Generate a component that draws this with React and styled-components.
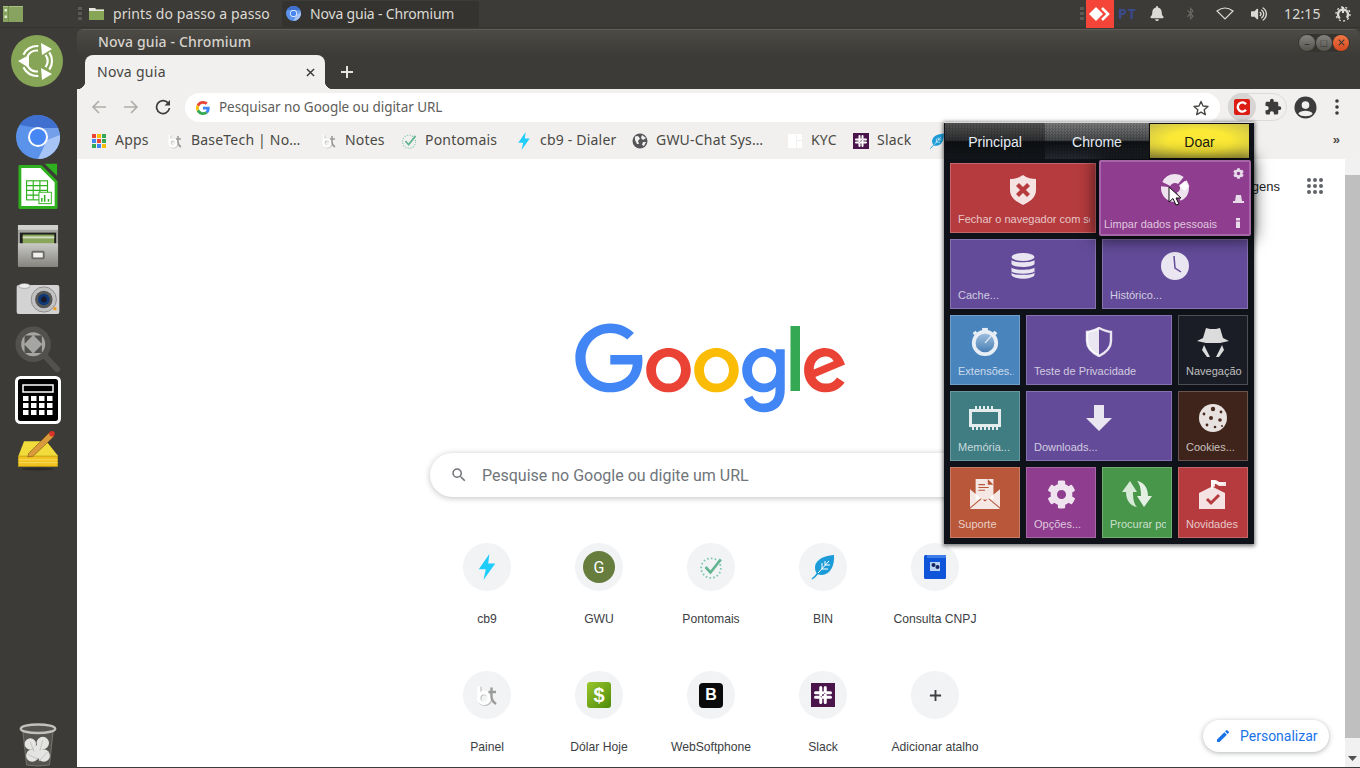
import React from 'react';
import styled, { createGlobalStyle } from 'styled-components';
import { FaCog, FaBell, FaBluetoothB, FaVolumeUp } from 'react-icons/fa';

const Global = createGlobalStyle`
  html, body { margin: 0; padding: 0; width: 1360px; height: 768px; overflow: hidden; background: #3c3b37; }
  #root { width: 1360px; height: 768px; }
  * { box-sizing: border-box; }
`;
const UI = `"Noto Sans", "Open Sans", sans-serif`;
const SANS = `"Liberation Sans", Arial, sans-serif`;

const Desktop = styled.div`
  width: 1360px; height: 768px; display: flex; flex-direction: column; background: #3c3b37; font-family: ${UI};
`;
const TopBar = styled.header`
  height: 28px; flex: none; display: flex; align-items: center; background: #3c3b37; color: #dcdad4;
  font-size: 14px; padding-left: 3px; border-bottom: 1px solid #35342f;
`;
const Grip = styled.span`
  width: 4px; height: 14px; flex: none; margin-left: ${p => p.$ml || 0}px;
  background: repeating-linear-gradient(#5b5a55 0 3px, transparent 3px 5px);
`;
const TaskItem = styled.div`
  display: flex; align-items: center; gap: ${p => p.$gap}px; height: 26px; margin-left: ${p => p.$ml}px;
  width: ${p => p.$w}px; padding-left: ${p => p.$pad}px; border-radius: 3px; background: ${p => p.$active ? '#34332f' : 'transparent'};
  letter-spacing: ${p => p.$ls}px; white-space: nowrap; font-size: 14px;
`;
const Tray = styled.div`
  margin-left: auto; display: flex; align-items: center; height: 28px;
`;
const AnyDesk = styled.div`
  width: 28px; height: 28px; background: #f44538; display: flex; align-items: center; justify-content: center; margin-left: 2px;
`;
const Lang = styled.span`
  color: #3b4a8f; font-weight: 700; font-size: 14px; width: 36px; padding-left: 4px; letter-spacing: 1px; font-family: ${UI};
`;
const TraySlot = styled.span`
  width: ${p => p.$w}px; margin-left: ${p => p.$ml || 0}px; display: flex; justify-content: center; align-items: center; color: ${p => p.$c || '#dcdad4'};
`;
const Clock = styled.span`
  width: 35px; font-size: 14px; letter-spacing: .2px; color: #dcdad4; white-space: nowrap;
`;
const Body = styled.div`
  flex: 1; min-height: 0; display: flex; padding-top: 1px;
`;
const Launcher = styled.nav`
  width: 77px; flex: none; display: flex; flex-direction: column; align-items: center; background: #3c3b37;
`;
const Slot = styled.div`
  height: ${p => p.$h}px; display: flex; align-items: center; justify-content: center; flex: none; width: 77px;
  margin-top: ${p => p.$auto ? 'auto' : `${p.$mt}px`}; padding-right: ${p => p.$pr ?? 1}px;
`;
const Win = styled.main`
  flex: 1; min-width: 0; display: flex; flex-direction: column; position: relative; border-radius: 6px 6px 0 0; overflow: hidden;
  background: #3c3b37; border-bottom: 1px solid #3c3b37;
`;
const TitleBar = styled.div`
  height: 26px; flex: none; display: flex; align-items: center; padding: 0 10px 0 21px; color: #d6d3cc;
  font-weight: 500; font-size: 14px; letter-spacing: .15px; border-top: 1px solid #5d5b56;
  background: linear-gradient(#4d4b46, #3c3b37);
`;
const Nudge = styled.span`
  margin-bottom: 2px; white-space: nowrap;
`;
const WinBtns = styled.div`
  margin-left: auto; display: flex; align-items: center; background: #35342f; border-radius: 10px; padding: 1px; gap: 1px;
`;
const WinBtn = styled.span`
  width: 16px; height: 16px; border-radius: 50%; display: flex; align-items: center; justify-content: center;
  color: #35342f; font-size: 11px; background: ${p => p.$close ? 'linear-gradient(#f07746, #d6481f)' : 'linear-gradient(#85837d, #55534e)'};
`;
const TabStrip = styled.div`
  height: 34px; flex: none; display: flex; align-items: flex-end; padding-left: 8px; background: #3c3b37;
`;
const Tab = styled.div`
  width: 240px; height: 34px; background: #f1f0ee; border-radius: 8px 8px 0 0; display: flex; align-items: center;
  padding: 0 10px 0 12px; color: #45443f; font-size: 14px; letter-spacing: .3px; position: relative;
  &::before, &::after { content: ''; position: absolute; bottom: 0; width: 8px; height: 8px; }
  &::before { left: -8px; background: radial-gradient(circle at 0 0, #3c3b37 8px, #f1f0ee 8.5px); }
  &::after { right: -8px; background: radial-gradient(circle at 100% 0, #3c3b37 8px, #f1f0ee 8.5px); }
`;
const TabClose = styled.span`
  margin-left: auto; display: flex; color: #3c3b37;
`;
const NewTab = styled.span`
  margin-left: 15px; margin-bottom: 10px; display: flex; color: #e6e4df;
`;
const Toolbar = styled.div`
  height: 33px; flex: none; background: #f1f0ee; display: flex; align-items: flex-start; padding: 4px 0 0 6px;
`;
const NavBtn = styled.span`
  width: 32px; height: 28px; display: flex; align-items: center; justify-content: center; flex: none;
`;
const Omni = styled.div`
  width: 1035px; height: 29px; background: #fff; border-radius: 15px; margin-left: 6px; display: flex; align-items: center;
  padding: 0 11px; color: #5f5e5a; font-size: 13.5px; letter-spacing: -.05px; gap: 9px; flex: none;
`;
const OmniStar = styled.span`
  margin-left: auto; display: flex;
`;
const ExtPill = styled.div`
  width: 59px; height: 28px; margin-left: 8px; border: 1px solid #dbdad8; border-radius: 14px; display: flex; align-items: center; flex: none;
`;
const ExtHover = styled.span`
  width: 28px; height: 28px; margin-left: -1px; border-radius: 50%; background: #d6d5d3; display: flex; align-items: center; justify-content: center;
`;
const ExtPuzzle = styled.span`
  margin-left: 8px; display: flex;
`;
const Avatar = styled.span`
  margin-left: 6px; width: 24px; height: 28px; display: flex; justify-content: center; align-items: center;
`;
const Kebab = styled.span`
  margin-left: 8px; width: 24px; height: 28px; display: flex; justify-content: center; align-items: center;
`;
const BookmarkBar = styled.div`
  height: 37px; flex: none; background: #f1f0ee; display: flex; align-items: center; padding-left: 14px; position: relative;
`;
const Bookmark = styled.div`
  display: flex; align-items: center; gap: 8px; flex: none; color: #4a4945; font-size: 14px; letter-spacing: .2px; white-space: nowrap;
`;
const BookmarkText = styled.span`
  width: ${p => p.$w}px; overflow: hidden; margin-bottom: 2px;
`;
const More = styled.span`
  margin-left: auto; margin-right: 20px; margin-bottom: 3px; color: #4a4945; font-size: 13px; font-family: ${SANS}; font-weight: 700;
`;
const PageArea = styled.div`
  flex: 1; min-height: 0; display: flex; background: #fff;
`;
const Ntp = styled.div`
  flex: 1; min-width: 0; display: flex; flex-direction: column; align-items: center; overflow: hidden; font-family: ${SANS}; position: relative;
`;
const NtpTop = styled.div`
  height: 54px; flex: none; width: 100%; display: flex; align-items: center; justify-content: flex-end; padding-right: 22px;
  font-size: 13px; color: #202124; gap: 27px;
`;
const LogoWrap = styled.div`
  margin-top: 110px; height: 92px; flex: none; display: flex;
`;
const Search = styled.div`
  margin-top: 38px; width: 562px; height: 44px; flex: none; border-radius: 22px; background: #fff; display: flex; align-items: center;
  box-shadow: 0 1px 6px rgba(32,33,36,.28); padding-left: 20px; gap: 14px; color: #70757a; font-size: 16px; font-family: "Roboto", sans-serif;
`;
const Shortcuts = styled.div`
  margin-top: 46px; display: grid; grid-template-columns: repeat(5, 112px); grid-auto-rows: 128px; flex: none;
`;
const Shortcut = styled.div`
  display: flex; flex-direction: column; align-items: center;
`;
const Circle = styled.div`
  width: 48px; height: 48px; border-radius: 50%; background: #f1f3f4; display: flex; align-items: center; justify-content: center;
`;
const ShortcutLabel = styled.div`
  margin-top: 20px; line-height: 16px; font-size: 12.15px; color: #3c4043; white-space: nowrap; font-family: ${SANS};
`;
const Personalize = styled.div`
  position: absolute; right: 16px; bottom: 15px; width: 126px; height: 32px; border-radius: 16px; background: #fff; display: flex; align-items: center;
  padding-left: 12px; gap: 9px; color: #1a73e8; font-size: 14px; font-family: "Roboto", sans-serif;
  box-shadow: 0 1px 5px rgba(60,64,67,.4);
`;
const Scrollbar = styled.div`
  width: 15px; flex: none; background: #f1f1f1; display: flex; flex-direction: column; align-items: center; color: #505050;
`;
const ScrollThumb = styled.div`
  width: 100%; margin-top: 16px; height: 563px; background: #bfbfbf;
`;
const ScrollArrow = styled.span`
  margin-top: ${p => p.$mt}px; display: flex;
`;
const Popup = styled.aside`
  position: absolute; left: 867px; top: 93px; width: 310px; height: 422px; background: #0f1319; padding: 0 1px;
  box-shadow: 0 1px 4px 1px rgba(0,0,0,.55); font-family: ${SANS}; border-top: 1px solid #d9d9d9; z-index: 3;
`;
const PopTabs = styled.div`
  display: flex; height: 36px; width: 305px;
`;
const PopTab = styled.div`
  width: ${p => p.$w}px; display: flex; align-items: center; justify-content: center; font-size: 14px; padding-top: 2px;
  color: ${p => p.$yellow ? '#1a1a10' : '#e6edf5'};
  border: ${p => p.$yellow ? '1px solid #111' : 'none'};
  background: ${p => p.$yellow
    ? 'radial-gradient(ellipse at center, #fbe936 45%, #c9bf4a 100%)'
    : `repeating-conic-gradient(rgba(0,0,0,.16) 0 25%, transparent 0 50%) 0 0 / 3px 3px, ${p.$active
      ? 'linear-gradient(#555, #2e2f31 48%, #0d1013 52%, #14181c)'
      : 'linear-gradient(#7c7c7c, #484a4c 48%, #0e1114 52%, #262a30)'}`};
`;
const PopGrid = styled.div`
  margin: 4px 0 0 5px; display: grid; grid-template-columns: repeat(4, 70px); grid-template-rows: repeat(4, 70px) 71px; gap: 6px;
`;
const Tile = styled.div`
  grid-column: span ${p => p.$span || 1}; position: relative; overflow: hidden; display: flex; flex-direction: column; align-items: center;
  background: ${p => p.$bg}; border: 1px solid rgba(255,255,255,.22); padding-top: 9px;
  ${p => p.$hover && `margin: -3px; z-index: 2; border-radius: 2px; box-shadow: 0 0 16px 4px rgba(0,0,0,.6); border-width: 2px; overflow: visible;`}
`;
const TileIcon = styled.div`
  height: 34px; display: flex; align-items: center; justify-content: center; flex: none;
`;
const TileLabel = styled.div`
  margin: auto ${p => p.$hover ? 3 : 5}px ${p => p.$hover ? 3 : 6}px ${p => p.$hover ? 3 : 7}px; align-self: stretch; font-size: 11px; line-height: 14px; white-space: nowrap; overflow: hidden;
  color: rgba(255,255,255,.72);
`;
const MiniTools = styled.div`
  position: absolute; right: 5px; top: 6px; bottom: 6px; width: 12px; display: flex; flex-direction: column; align-items: center; justify-content: space-between;
`;
const Cursor = styled.svg`
  position: absolute; left: 67px; top: 24px; z-index: 3;
`;

const arc = (c, r, a0, a1) => {
  const p = a => [c + r * Math.cos(a * Math.PI / 180), c + r * Math.sin(a * Math.PI / 180)].map(v => v.toFixed(2)).join(' ');
  return `M${p(a0)} A${r} ${r} 0 0 1 ${p(a1)}`;
};
const UbuntuMate = () => (
  <svg width="52" height="52" viewBox="0 0 52 52">
    <circle cx="26" cy="26" r="26" fill="#87a556" />
    {[[-35, 35], [85, 155], [-155, -85]].map(([a, b]) => (
      <g key={a} fill="none" stroke="#fff" strokeWidth="2.2">
        <path d={arc(26, 15, a, b)} /><path d={arc(26, 10.5, a, b)} />
      </g>
    ))}
    <polygon points="30,8 41,14 31,20" fill="#fff" />
    <polygon points="7,26 18,20 18,33" fill="#fff" />
    <polygon points="30,33 41,39 31,45" fill="#fff" />
  </svg>
);
const Chromium = ({ s = 44 }) => (
  <svg width={s} height={s} viewBox="0 0 44 44">
    <circle cx="22" cy="22" r="22" fill="#5b93ea" />
    <path d="M3.5 10 A22 22 0 0 1 42 13 L22 13 Z" fill="#3f70cf" />
    <path d="M22 13 H42 A22 22 0 0 1 44 22 L30 27 Z" fill="#739fea" />
    <path d="M31 25 L44 20 A22 22 0 0 1 22 44 Z" fill="#a6c4f6" />
    <circle cx="22" cy="22" r="10" fill="#fff" />
    <circle cx="22" cy="22" r="8" fill="#4787f3" />
  </svg>
);
const CalcDoc = () => (
  <svg width="40" height="48" viewBox="0 0 42 49">
    <path d="M2 3 H24 L40 19 V46 H2 Z" fill="#fff" stroke="#2fb01e" strokeWidth="3" strokeLinejoin="round" />
    <polygon points="28,0 41,0 41,13" fill="#2fb01e" />
    <g stroke="#2fb01e" strokeWidth="1.2" fill="none">
      <rect x="9" y="18" width="22" height="20" />
      <path d="M9 23 H31 M9 28 H31 M9 33 H31 M16 18 V38 M23 18 V38" />
    </g>
    <rect x="22" y="30" width="13" height="12" fill="#fff" stroke="#2fb01e" />
    <path d="M25 40 V36 M28 40 V33 M32 40 V37" stroke="#2fb01e" strokeWidth="1.6" />
  </svg>
);
const Cabinet = () => (
  <svg width="42" height="46" viewBox="0 0 44 46">
    <defs><linearGradient id="cabg" x1="0" y1="0" x2="0" y2="1"><stop offset="0" stopColor="#c9c9c6" /><stop offset="1" stopColor="#85847f" /></linearGradient></defs>
    <rect x="1" y="1" width="42" height="44" rx="2" fill="#a5a5a1" />
    <rect x="1" y="1" width="42" height="5" fill="#d0d0cc" />
    <rect x="3" y="9" width="38" height="14" fill="#1f1f1d" />
    <rect x="6" y="11" width="33" height="10" fill="#8aa65a" />
    <rect x="6" y="13" width="33" height="2" fill="#d3dcc0" />
    <rect x="1" y="20" width="42" height="25" rx="1" fill="url(#cabg)" />
    <rect x="15" y="28" width="14" height="9" rx="2" fill="#6b6a66" />
    <rect x="17" y="30" width="10" height="5" fill="#f0f0ee" />
  </svg>
);
const Camera = () => (
  <svg width="44" height="32" viewBox="0 0 44 33">
    <rect x="0" y="2" width="44" height="30" rx="2" fill="#d3d3d3" />
    <ellipse cx="8" cy="3" rx="6" ry="2.5" fill="#eee" stroke="#888" strokeWidth=".6" />
    <circle cx="28" cy="17" r="13" fill="#c2c2c2" stroke="#8c8c8c" />
    <circle cx="28" cy="17" r="9" fill="#555" />
    <circle cx="28" cy="17" r="6" fill="#0e3a7a" />
    <circle cx="28" cy="17" r="3" fill="#1b1b2a" />
    <rect x="38" y="25" width="3" height="3" fill="#f29a1f" />
  </svg>
);
const Magnifier = () => (
  <svg width="48" height="48" viewBox="0 0 48 50">
    <line x1="30" y1="30" x2="44" y2="45" stroke="#52514d" strokeWidth="6" strokeLinecap="round" />
    <circle cx="19" cy="19" r="15.5" fill="#a5a5a3" stroke="#52514d" strokeWidth="6" />
    <path d="M11 11 H16 L11 16 Z M27 11 H22 L27 16 Z M11 27 H16 L11 22 Z M27 27 H22 L27 22 Z" fill="#52514d" stroke="#52514d" strokeWidth="2" />
  </svg>
);
const Calculator = () => (
  <svg width="46" height="48" viewBox="0 0 46 48">
    <rect x="1.5" y="1.5" width="43" height="45" rx="4" fill="#000" stroke="#fff" strokeWidth="3" />
    <rect x="8" y="9" width="30" height="7" fill="#000" stroke="#fff" strokeWidth="1.5" />
    {[20, 27, 34].map(y => [8, 16, 24, 32].map(x => <rect key={`${x}${y}`} x={x} y={y} width="5.5" height="5" fill="#fff" />))}
  </svg>
);
const Notepad = () => (
  <svg width="42" height="41" viewBox="0 0 44 44">
    <path d="M7 12 H31 L43 27 V39 H1 V28 Z" fill="#f2dc3c" />
    <rect x="1" y="28" width="42" height="11" fill="#f1c220" stroke="#b59a10" strokeWidth=".8" />
    <path d="M1 32 H43 M1 35 H43" stroke="#f7dd62" />
    <path d="M12 25 L34 3 L39 7 L17 28 L11 29 Z" fill="#d99a3c" stroke="#7a5116" strokeWidth=".6" />
    <circle cx="37" cy="4" r="3" fill="#d8342a" />
    <ellipse cx="22" cy="42" rx="17" ry="1.5" fill="#2b2a27" />
  </svg>
);
const Trash = () => (
  <svg width="38" height="44" viewBox="0 0 38 46">
    <path d="M3 7 L7 44 Q19 46 31 44 L35 7 Z" fill="#55544f" stroke="#8a8a86" strokeWidth=".7" />
    <ellipse cx="19" cy="6" rx="18" ry="4.5" fill="#55544f" stroke="#c2c2bd" strokeWidth="2.5" />
    <g fill="#e4e4e2">
      <circle cx="11" cy="22" r="6" /><circle cx="24" cy="21" r="6.5" /><circle cx="13" cy="34" r="6.5" /><circle cx="25" cy="34" r="6.5" /><circle cx="19" cy="28" r="5" />
    </g>
    <path d="M11 20 L15 30 M24 18 L21 29 M9 33 L19 38 M29 30 L20 40" stroke="#c0c0bd" strokeWidth="1" />
  </svg>
);
const FolderIcon = ({ w = 15, h = 13 }) => (
  <svg width={w} height={h} viewBox="0 0 15 13">
    <path d="M0 1 H6 L7 2.5 H15 V13 H0 Z" fill="#87a556" />
    <path d="M0 1 H6 L7 2.5 H15 V4 H0 Z" fill="#e8e6e0" />
  </svg>
);
const ShowDesk = () => (
  <svg width="20" height="16" viewBox="0 0 20 16">
    <rect x="0" y="0" width="20" height="16" fill="#87a35f" />
    <rect x="0" y="0" width="20" height="1" fill="#a9c083" />
    <rect x="5" y="0" width="1" height="16" fill="#728e4b" />
    <rect x="1.5" y="3" width="2.5" height="2.5" fill="#e2ead2" />
    <rect x="1.5" y="9.5" width="2.5" height="2.5" fill="#e2ead2" />
  </svg>
);
const AnyDeskMark = () => (
  <svg width="22" height="14" viewBox="0 0 22 14">
    <polygon points="0,7 7,0 14,7 7,14" fill="#fff" />
    <path d="M13 1 L19 7 L13 13" fill="none" stroke="#fff" strokeWidth="2.6" />
  </svg>
);
const Wifi = () => (
  <svg width="18" height="13" viewBox="0 0 18 13"><path d="M1 4 Q9 -2 17 4 L9 12 Z" fill="none" stroke="#dcdad4" strokeWidth="1.2" /></svg>
);
const Power = () => (
  <svg width="16" height="16" viewBox="0 0 16 16" fill="none" stroke="#dcdad4">
    <circle cx="8" cy="8.5" r="5" strokeWidth="2.4" strokeDasharray="24 7.5" strokeDashoffset="-11" />
    <path d="M8 1 V7" strokeWidth="2.2" />
    <circle cx="8" cy="8" r="7" strokeWidth="1.4" strokeDasharray="2 2.4" />
  </svg>
);
const XGlyph = ({ s = 10, c = 'currentColor', w = 1.6 }) => (
  <svg width={s} height={s} viewBox="0 0 10 10"><path d="M1 1 L9 9 M9 1 L1 9" stroke={c} strokeWidth={w} /></svg>
);
const PlusGlyph = ({ s = 14, c = 'currentColor', w = 2 }) => (
  <svg width={s} height={s} viewBox="0 0 14 14"><path d="M7 1 V13 M1 7 H13" stroke={c} strokeWidth={w} /></svg>
);
const Arrow = ({ dir, c }) => (
  <svg width="16" height="16" viewBox="0 0 16 16" fill="none" stroke={c} strokeWidth="1.6" style={{ transform: dir === 'r' ? 'scaleX(-1)' : 'none' }}>
    <path d="M15 8 H2 M8 2 L2 8 L8 14" />
  </svg>
);
const Reload = () => (
  <svg width="16" height="16" viewBox="0 0 16 16" fill="none">
    <path d="M13.5 4.5 A6.5 6.5 0 1 0 14.5 9" stroke="#3c3c3c" strokeWidth="1.7" />
    <polygon points="15,1 15,6.5 9.5,6.5" fill="#3c3c3c" />
  </svg>
);
const GIcon = () => (
  <svg width="14" height="14" viewBox="0 0 48 48">
    <path fill="#EA4335" d="M24 9.5c3.54 0 6.71 1.22 9.21 3.6l6.85-6.85C35.9 2.38 30.47 0 24 0 14.62 0 6.51 5.38 2.56 13.22l7.98 6.19C12.43 13.72 17.74 9.5 24 9.5z" />
    <path fill="#4285F4" d="M46.98 24.55c0-1.57-.15-3.09-.38-4.55H24v9.02h12.94c-.58 2.96-2.26 5.48-4.78 7.18l7.73 6c4.51-4.18 7.09-10.36 7.09-17.65z" />
    <path fill="#FBBC05" d="M10.53 28.59c-.48-1.45-.76-2.99-.76-4.59s.27-3.14.76-4.59l-7.98-6.19C.92 16.46 0 20.12 0 24c0 3.88.92 7.54 2.56 10.78l7.97-6.19z" />
    <path fill="#34A853" d="M24 48c6.48 0 11.93-2.13 15.89-5.81l-7.73-6c-2.15 1.45-4.92 2.3-8.16 2.3-6.26 0-11.57-4.22-13.47-9.91l-7.98 6.19C6.51 42.62 14.62 48 24 48z" />
  </svg>
);
const Star = () => (
  <svg width="16" height="16" viewBox="0 0 16 16"><path d="M8 1.5 L10 6 L15 6.5 L11.2 9.8 L12.3 14.7 L8 12.2 L3.7 14.7 L4.8 9.8 L1 6.5 L6 6 Z" fill="none" stroke="#4a4945" strokeWidth="1.4" strokeLinejoin="round" /></svg>
);
const RedC = () => (
  <svg width="16" height="16" viewBox="0 0 16 16">
    <rect width="16" height="16" rx="2" fill="#dc1c13" />
    <path d="M12 5.2 A4.6 4.6 0 1 0 12 10.8" fill="none" stroke="#fff" strokeWidth="2.4" />
  </svg>
);
const Puzzle = () => (
  <svg width="18" height="18" viewBox="0 0 24 24" fill="#3c3c3c"><path d="M20.5 11H19V7c0-1.1-.9-2-2-2h-4V3.5C13 2.12 11.88 1 10.5 1S8 2.12 8 3.5V5H4c-1.1 0-1.99.9-1.99 2v3.8H3.5c1.49 0 2.7 1.21 2.7 2.7s-1.21 2.7-2.7 2.7H2V20c0 1.1.9 2 2 2h3.8v-1.5c0-1.49 1.21-2.7 2.7-2.7 1.49 0 2.7 1.21 2.7 2.7V22H17c1.1 0 2-.9 2-2v-4h1.5c1.38 0 2.5-1.12 2.5-2.5S21.88 11 20.5 11z" /></svg>
);
const AvatarIcon = () => (
  <svg width="23" height="23" viewBox="0 0 24 24">
    <circle cx="12" cy="12" r="11.5" fill="#3c3c3c" />
    <circle cx="12" cy="9.5" r="4" fill="#f1f0ee" />
    <path d="M4.5 18.5 C7 14.5 17 14.5 19.5 18.5 C17 22 7 22 4.5 18.5Z" fill="#f1f0ee" />
  </svg>
);
const KebabIcon = () => (
  <svg width="4" height="16" viewBox="0 0 4 16" fill="#3c3c3c"><circle cx="2" cy="2" r="1.8" /><circle cx="2" cy="8" r="1.8" /><circle cx="2" cy="14" r="1.8" /></svg>
);
const AppsDots = () => {
  const c = ['#ea4335', '#fbbc05', '#34a853', '#4285f4', '#ea4335', '#34a853', '#34a853', '#4285f4', '#fbbc05'];
  return (
    <svg width="16" height="16" viewBox="0 0 16 16">
      {c.map((f, i) => <rect key={i} x={1 + (i % 3) * 5} y={1 + Math.floor(i / 3) * 5} width="4" height="4" fill={f} />)}
    </svg>
  );
};
const BtMark = ({ s = 16 }) => (
  <svg width={s} height={s} viewBox="0 0 16 16" fill="none">
    <g stroke="#bdbdbd" strokeWidth="2.6" transform="translate(.6 .5)">
      <circle cx="6" cy="10" r="3.6" /><path d="M2.5 2 V9" />
    </g>
    <circle cx="6" cy="10" r="3.6" stroke="#fff" strokeWidth="2.4" />
    <path d="M2.5 2 V9" stroke="#fff" strokeWidth="2.2" />
    <path d="M11 3 V9 Q11 12 14 14 M9 6 H14" stroke="#9b9b9b" strokeWidth="1.6" />
  </svg>
);
const PontoMark = ({ s = 16 }) => (
  <svg width={s} height={s} viewBox="0 0 22 22" fill="none">
    <circle cx="11" cy="12" r="9" stroke="#7fc7ad" strokeWidth="1.6" strokeDasharray="1.5 2" />
    <path d="M6 11 L10.5 16 L20 4" stroke="#63b592" strokeWidth="2.4" />
  </svg>
);
const Bolt = ({ s = 16, h = 18 }) => (
  <svg width={s} height={h} viewBox="0 0 14 22"><path d="M9 0 L0 13 H6 L4 22 L14 8 H8 Z" fill="#1fcdfa" /></svg>
);
const Globe = () => (
  <svg width="16" height="16" viewBox="0 0 16 16">
    <circle cx="8" cy="8" r="7.5" fill="#55555a" />
    <path d="M3 3.5 L6 3 L8 5.5 L6 8 L7 11 L5 11 L3 7 Z M10 2 L14 5 L11 7 L9 5 Z M11 9 H14 L12 13 L10 12 Z" fill="#f1f0ee" />
  </svg>
);
const KycMark = () => (
  <svg width="16" height="16" viewBox="0 0 16 16" fill="#fff"><rect x="1" y="1" width="8" height="14" /><rect x="10" y="1" width="5" height="6" /><rect x="10" y="8" width="5" height="7" /></svg>
);
const SlackMark = ({ s = 16 }) => (
  <svg width={s} height={s} viewBox="0 0 16 16">
    <rect width="16" height="16" fill="#4a154b" />
    <path d="M3 6.5 H8 M8 9.5 H13 M6.5 3 V8 M9.5 8 V13 M3 9.5 H5.5 M10.5 6.5 H13 M6.5 10.5 V13 M9.5 3 V5.5" stroke="#fff" strokeWidth="2" strokeLinecap="round" />
  </svg>
);
const GoogleLogo = () => (
  <svg width="272" height="92" viewBox="0 0 272 92">
    <path fill="#EA4335" d="M115.75 47.18c0 12.77-9.99 22.18-22.25 22.18s-22.25-9.41-22.25-22.18C71.25 34.32 81.24 25 93.5 25s22.25 9.32 22.25 22.18zm-9.74 0c0-7.98-5.79-13.44-12.51-13.44S80.99 39.2 80.99 47.18c0 7.9 5.79 13.44 12.51 13.44s12.51-5.55 12.51-13.44z" />
    <path fill="#FBBC05" d="M163.75 47.18c0 12.77-9.99 22.18-22.25 22.18s-22.25-9.41-22.25-22.18c0-12.85 9.99-22.18 22.25-22.18s22.25 9.32 22.25 22.18zm-9.74 0c0-7.98-5.79-13.44-12.51-13.44s-12.51 5.46-12.51 13.44c0 7.9 5.79 13.44 12.51 13.44s12.51-5.55 12.51-13.44z" />
    <path fill="#4285F4" d="M209.75 26.34v39.82c0 16.38-9.66 23.07-21.08 23.07-10.75 0-17.22-7.19-19.66-13.07l8.48-3.53c1.51 3.61 5.21 7.87 11.17 7.87 7.31 0 11.84-4.51 11.84-13v-3.19h-.34c-2.18 2.69-6.38 5.04-11.68 5.04-11.09 0-21.25-9.66-21.25-22.09 0-12.52 10.16-22.26 21.25-22.26 5.29 0 9.49 2.35 11.68 4.96h.34v-3.61h9.25zm-8.56 20.92c0-7.81-5.21-13.52-11.84-13.52-6.72 0-12.35 5.71-12.35 13.52 0 7.73 5.63 13.36 12.35 13.36 6.63 0 11.84-5.63 11.84-13.36z" />
    <path fill="#34A853" d="M225 3v65h-9.5V3h9.5z" />
    <path fill="#EA4335" d="M262.02 54.48l7.56 5.04c-2.44 3.61-8.32 9.83-18.48 9.83-12.6 0-22.01-9.74-22.01-22.18 0-13.19 9.49-22.18 20.92-22.18 11.51 0 17.14 9.16 18.98 14.11l1.01 2.52-29.65 12.28c2.27 4.45 5.8 6.72 10.75 6.72 4.96 0 8.4-2.44 10.92-6.14zm-23.27-7.98l19.82-8.23c-1.09-2.77-4.37-4.7-8.23-4.7-4.95 0-11.84 4.37-11.59 12.93z" />
    <path fill="#4285F4" d="M35.29 41.41V32H67c.31 1.64.47 3.58.47 5.68 0 7.06-1.93 15.79-8.15 22.01-6.05 6.3-13.78 9.66-24.02 9.66C16.32 69.35.36 53.89.36 34.91.36 15.93 16.32.47 35.3.47c10.5 0 17.98 4.12 23.6 9.49l-6.64 6.64c-4.03-3.78-9.49-6.72-16.97-6.72-13.86 0-24.7 11.17-24.7 25.03 0 13.86 10.84 25.03 24.7 25.03 8.99 0 14.11-3.61 17.39-6.89 2.66-2.66 4.41-6.46 5.1-11.65l-22.49.01z" />
  </svg>
);
const SearchGlyph = () => (
  <svg width="18" height="18" viewBox="0 0 24 24" fill="#70757a"><path d="M15.5 14h-.79l-.28-.27A6.47 6.47 0 0 0 16 9.5 6.5 6.5 0 1 0 9.5 16c1.61 0 3.09-.59 4.23-1.57l.27.28v.79l5 4.99L20.49 19l-4.99-5zm-6 0C7.01 14 5 11.99 5 9.5S7.01 5 9.5 5 14 7.01 14 9.5 11.99 14 9.5 14z" /></svg>
);
const NineDots = () => (
  <svg width="16" height="16" viewBox="0 0 16 16" fill="#5f6368">
    {[2, 8, 14].map(y => [2, 8, 14].map(x => <circle key={`${x}${y}`} cx={x} cy={y} r="2" />))}
  </svg>
);
const PenGlyph = () => (
  <svg width="16" height="16" viewBox="0 0 24 24" fill="#1a73e8"><path d="M3 17.25V21h3.75L17.81 9.94l-3.75-3.75L3 17.25zM20.71 7.04a1 1 0 0 0 0-1.41l-2.34-2.34a1 1 0 0 0-1.41 0l-1.83 1.83 3.75 3.75 1.83-1.83z" /></svg>
);
const Leaf = ({ s = 26 }) => (
  <svg width={s} height={s} viewBox="0 0 24 26">
    <path d="M6 20 C0 10 8 2 23 1 C24 14 17 24 6 20 Z" fill="#1b9bd8" />
    <path d="M1 25 Q5 21 8 18 L18 7 M11 15 V9 M11 15 H17 M14 11 V7 M14 11 H19" stroke="#fff" strokeWidth="1" fill="none" />
    <path d="M1 25 Q4 23 7 19" stroke="#1b9bd8" strokeWidth="1.5" fill="none" />
  </svg>
);
const Cnpj = () => (
  <svg width="22" height="26" viewBox="0 0 22 26">
    <rect x="0" y="1" width="22" height="24" rx="1.5" fill="#0f55d9" />
    <rect x="3" y="1" width="19" height="3" fill="#3f7ee8" />
    <rect x="6" y="8" width="10" height="9" fill="#bcd2f5" />
    <circle cx="9.5" cy="11" r="2" fill="#12245f" /><circle cx="13.5" cy="13" r="2" fill="#12245f" />
  </svg>
);
const GwuLetter = styled.div`
  width: 32px; height: 32px; border-radius: 50%; background: #667d3e; color: #fff; font-size: 16px; display: flex; align-items: center; justify-content: center; font-family: "Roboto", sans-serif;
`;
const Dollar = styled.div`
  width: 24px; height: 26px; border-radius: 3px; background: linear-gradient(135deg, #9ac62b, #4d8a0a); color: #fff; font-weight: 700; font-size: 20px; display: flex; align-items: center; justify-content: center;
`;
const BootB = styled.div`
  width: 24px; height: 25px; border-radius: 4px; background: #0a0a0a; color: #fff; font-weight: 700; font-size: 16px; display: flex; align-items: center; justify-content: center;
`;

/* tile icons */
const W = 'rgba(255,255,255,.86)';
const ShieldX = ({ bg }) => (
  <svg width="28" height="30" viewBox="0 0 28 30">
    <path d="M14 0 C18 3 23 4 27 4 V15 C27 23 20 27 14 30 C8 27 1 23 1 15 V4 C5 4 10 3 14 0 Z" fill={W} />
    <path d="M8.5 9.5 L19.5 20.5 M19.5 9.5 L8.5 20.5" stroke={bg} strokeWidth="4.2" />
  </svg>
);
const RecycleIcon = () => (
  <svg width="32" height="32" viewBox="0 0 32 32">
    <circle cx="16" cy="16" r="9.5" fill="none" stroke={W} strokeWidth="9" strokeDasharray="17 2.9" strokeDashoffset="6" />
    <rect x="22" y="10.5" width="7" height="7" transform="rotate(45 25.5 14)" fill={W} />
  </svg>
);
const DbIcon = () => (
  <svg width="24" height="26" viewBox="0 0 24 26" fill={W}>
    <ellipse cx="12" cy="4" rx="11.5" ry="4" />
    <path d="M.5 7 C3 10 21 10 23.5 7 V11 C21 15 3 15 .5 11 Z" />
    <path d="M.5 14.5 C3 17.5 21 17.5 23.5 14.5 V22 C21 27 3 27 .5 22 Z" />
    <path d="M.5 19 C3 22 21 22 23.5 19" stroke="#634b99" strokeWidth="1.2" fill="none" />
  </svg>
);
const ClockIcon = () => (
  <svg width="30" height="30" viewBox="0 0 30 30">
    <circle cx="15" cy="15" r="14" fill={W} />
    <path d="M14 5 L15 17 L21 21" stroke="#634b99" strokeWidth="1.5" fill="none" />
  </svg>
);
const Stopwatch = () => (
  <svg width="30" height="30" viewBox="0 0 30 32">
    <defs><linearGradient id="stw" x1="0" y1="0" x2="0" y2="1"><stop offset="0" stopColor="#a7c5e2" /><stop offset="1" stopColor="#3e78b0" /></linearGradient></defs>
    <circle cx="15" cy="17" r="12" fill="url(#stw)" stroke="#e8eef5" strokeWidth="4" />
    <rect x="12" y="1" width="6" height="3" fill="#e8eef5" /><rect x="24" y="5" width="4" height="3" fill="#e8eef5" transform="rotate(40 26 6)" /><rect x="2" y="5" width="4" height="3" fill="#e8eef5" transform="rotate(-40 4 6)" />
    <path d="M15 17 L22 9" stroke="#d9e5f1" strokeWidth="1.5" />
  </svg>
);
const HalfShield = () => (
  <svg width="28" height="30" viewBox="0 0 28 30">
    <path d="M14 1 C18 3 23 5 26 5 V14 C26 22 20 26 14 29 C8 26 2 22 2 14 V5 C5 5 10 3 14 1 Z" fill="none" stroke={W} strokeWidth="2.4" />
    <path d="M14 1 V29 C8 26 2 22 2 14 V5 C5 5 10 3 14 1 Z" fill={W} />
  </svg>
);
const SpyIcon = () => (
  <svg width="32" height="32" viewBox="0 0 32 32" fill="#dcdcdc">
    <path d="M9 2 L13 3 H19 L23 2 L26 12 L32 15 L23 17 H9 L0 15 L6 12 Z" />
    <path d="M7 19 L5 24 L10 31 H13 Z M25 19 L27 24 L22 31 H19 Z" />
    <path d="M10 18 Q16 26 22 18 L16 22 Z" fill="#1a1d25" />
  </svg>
);
const ChipIcon = () => (
  <svg width="32" height="24" viewBox="0 0 32 24">
    <rect x="1.5" y="4.5" width="29" height="15" fill="none" stroke={W} strokeWidth="3" />
    <path d="M4 24 V21 M8 24 V21 M12 24 V21 M16 24 V21 M20 24 V21 M24 24 V21 M28 24 V21 M7 3 V0 M11 3 V0 M15 3 V0 M19 3 V0 M23 3 V0" stroke={W} strokeWidth="2" />
  </svg>
);
const DownIcon = () => (
  <svg width="26" height="26" viewBox="0 0 26 26"><polygon points="8,0 18,0 18,13 26,13 13,26 0,13 8,13" fill={W} /></svg>
);
const CookieIcon = () => (
  <svg width="30" height="30" viewBox="0 0 30 30">
    <circle cx="15" cy="15" r="14" fill="#e7e2df" />
    <g fill="#4a2a20"><circle cx="15" cy="6" r="2.2" /><circle cx="23" cy="9" r="1.4" /><circle cx="6" cy="11" r="1.4" /><circle cx="13" cy="15" r="2" /><circle cx="22" cy="17" r="1.8" /><circle cx="9" cy="22" r="1.4" /><circle cx="17" cy="24" r="1.3" /><circle cx="24" cy="23" r="1" /></g>
  </svg>
);
const MailIcon = ({ bg }) => (
  <svg width="32" height="30" viewBox="0 0 32 32">
    <rect x="6" y="0" width="19" height="22" fill={W} />
    <polygon points="19,0 25,6 19,6" fill={bg} />
    <path d="M9 6 H16 M9 9 H20 M9 12 H16" stroke={bg} strokeWidth="1.2" />
    <path d="M0 11 L16 24 L32 11 V31 Q32 32 31 32 H1 Q0 32 0 31 Z" fill={W} />
    <path d="M0 31 L12 21 M32 31 L20 21" stroke={bg} strokeWidth="1.2" />
  </svg>
);
const SyncIcon = () => (
  <svg width="30" height="26" viewBox="0 0 30 26" fill={W}>
    <path d="M8 0 L0 11 H4 C4 20 9 25 15 26 C12 23 11 18 11 11 H15 Z" fill="#d6ead7" />
    <path d="M22 26 L30 15 H26 C26 6 21 1 15 0 C18 3 19 8 19 15 H15 Z" />
  </svg>
);
const MailboxIcon = ({ bg }) => (
  <svg width="28" height="30" viewBox="0 0 28 30">
    <path d="M0 14 L12 8 V1 H14 L26 5 L20 5.5 L16 4 V7.5 L14 8 L26 14 V30 H0 Z" fill={W} />
    <path d="M12 1 H17 L20 3 H27 V7 H20 L17 5 H14 V10 H12 Z" fill={W} />
    <path d="M8 20 L12 24 L20 16" stroke={bg} strokeWidth="3" fill="none" />
  </svg>
);
const HatMini = () => (
  <svg width="11" height="8" viewBox="0 0 11 8" fill="#e9dcea"><path d="M3 0 H8 L9 6 H11 V8 H0 V6 H2 Z" /></svg>
);
const InfoMini = () => (
  <svg width="6" height="10" viewBox="0 0 6 10" fill="#e9dcea"><rect x="1" y="0" width="4" height="2.5" /><rect x="1" y="3.5" width="4" height="6.5" /></svg>
);

const tabsData = [['Principal', 100, true], ['Chrome', 104], ['Doar', 101, false, true]];
const RED = '#b53b3e', PUR = '#8f3d8e', VIO = '#634b99';
const tiles = [
  { l: 'Fechar o navegador com segurança', s: 2, bg: RED, i: <ShieldX bg={RED} /> },
  { l: 'Limpar dados pessoais', s: 2, bg: PUR, i: <RecycleIcon />, hover: true },
  { l: 'Cache...', s: 2, bg: VIO, i: <DbIcon /> },
  { l: 'Histórico...', s: 2, bg: VIO, i: <ClockIcon /> },
  { l: 'Extensões...', bg: '#4a84bd', i: <Stopwatch /> },
  { l: 'Teste de Privacidade', s: 2, bg: VIO, i: <HalfShield /> },
  { l: 'Navegação', bg: '#1a1d25', i: <SpyIcon /> },
  { l: 'Memória...', bg: '#3f7d83', i: <ChipIcon /> },
  { l: 'Downloads...', s: 2, bg: VIO, i: <DownIcon /> },
  { l: 'Cookies...', bg: '#3f241b', i: <CookieIcon /> },
  { l: 'Suporte', bg: '#b9573a', i: <MailIcon bg="#b9573a" /> },
  { l: 'Opções...', bg: PUR, i: <FaCog size={29} color={W} /> },
  { l: 'Procurar por atualizações', bg: '#48964a', i: <SyncIcon /> },
  { l: 'Novidades', bg: RED, i: <MailboxIcon bg={RED} /> },
];
const bookmarks = [
  ['Apps', 52, <AppsDots />],
  ['BaseTech | No…', 130, <BtMark />],
  ['Notes', 56, <BtMark />],
  ['Pontomais', 91, <PontoMark />],
  ['cb9 - Dialer', 92, <Bolt />],
  ['GWU-Chat Sys…', 131, <Globe />],
  ['KYC', 42, <KycMark />],
  ['Slack', 52, <SlackMark />],
  ['BIN', 40, <Leaf s={16} />],
];
const shortcuts = [
  ['cb9', <Bolt s={18} h={26} />],
  ['GWU', <GwuLetter>G</GwuLetter>],
  ['Pontomais', <PontoMark s={24} />],
  ['BIN', <Leaf />],
  ['Consulta CNPJ', <Cnpj />],
  ['Painel', <BtMark s={24} />],
  ['Dólar Hoje', <Dollar>$</Dollar>],
  ['WebSoftphone', <BootB>B</BootB>],
  ['Slack', <SlackMark s={24} />],
  ['Adicionar atalho', <PlusGlyph s={13} c="#3c4043" />],
];

export default function App() {
  return (
    <Desktop>
      <Global />
      <TopBar>
        <ShowDesk />
        <Grip $ml={55} />
        <TaskItem $gap={9} $ml={7} $w={190} $pad={0} $ls={0.1}><FolderIcon />prints do passo a passo</TaskItem>
        <TaskItem $gap={9} $ml={3} $w={197} $pad={4} $ls={-0.18} $active><Chromium s={15} />Nova guia - Chromium</TaskItem>
        <Tray>
          <Grip />
          <AnyDesk><AnyDeskMark /></AnyDesk>
          <Lang>PT</Lang>
          <TraySlot $w={14}><FaBell size={15} /></TraySlot>
          <TraySlot $w={52} $c="#6c6b66"><FaBluetoothB size={13} /></TraySlot>
          <TraySlot $w={18}><Wifi /></TraySlot>
          <TraySlot $w={50}><FaVolumeUp size={16} /></TraySlot>
          <Clock>12:15</Clock>
          <TraySlot $w={34} $ml={7}><Power /></TraySlot>
        </Tray>
      </TopBar>
      <Body>
        <Launcher>
          <Slot $mt={6} $h={52} $pr={3}><UbuntuMate /></Slot>
          <Slot $mt={28} $h={44}><Chromium /></Slot>
          <Slot $mt={4} $h={48}><CalcDoc /></Slot>
          <Slot $mt={12} $h={46}><Cabinet /></Slot>
          <Slot $mt={14} $h={32}><Camera /></Slot>
          <Slot $mt={11} $h={48}><Magnifier /></Slot>
          <Slot $mt={2} $h={48}><Calculator /></Slot>
          <Slot $mt={6} $h={41}><Notepad /></Slot>
          <Slot $h={46} $auto><Trash /></Slot>
        </Launcher>
        <Win>
          <TitleBar>
            <Nudge>Nova guia - Chromium</Nudge>
            <WinBtns>
              <WinBtn>–</WinBtn>
              <WinBtn>□</WinBtn>
              <WinBtn $close><XGlyph s={7} c="#3c3b37" /></WinBtn>
            </WinBtns>
          </TitleBar>
          <TabStrip>
            <Tab><Nudge>Nova guia</Nudge><TabClose><XGlyph s={9} /></TabClose></Tab>
            <NewTab><PlusGlyph /></NewTab>
          </TabStrip>
          <Toolbar>
            <NavBtn><Arrow c="#aeadaa" /></NavBtn>
            <NavBtn><Arrow dir="r" c="#aeadaa" /></NavBtn>
            <NavBtn><Reload /></NavBtn>
            <Omni>
              <GIcon />
              <Nudge>Pesquisar no Google ou digitar URL</Nudge>
              <OmniStar><Star /></OmniStar>
            </Omni>
            <ExtPill>
              <ExtHover><RedC /></ExtHover>
              <ExtPuzzle><Puzzle /></ExtPuzzle>
            </ExtPill>
            <Avatar><AvatarIcon /></Avatar>
            <Kebab><KebabIcon /></Kebab>
          </Toolbar>
          <BookmarkBar>
            {bookmarks.map(([t, w, ic]) => (
              <Bookmark key={t}>{ic}<BookmarkText $w={w}>{t}</BookmarkText></Bookmark>
            ))}
            <More>»</More>
          </BookmarkBar>
          <PageArea>
            <Ntp>
              <NtpTop>
                <span>Imagens</span>
                <NineDots />
              </NtpTop>
              <LogoWrap><GoogleLogo /></LogoWrap>
              <Search><SearchGlyph />Pesquise no Google ou digite um URL</Search>
              <Shortcuts>
                {shortcuts.map(([t, ic]) => (
                  <Shortcut key={t}><Circle>{ic}</Circle><ShortcutLabel>{t}</ShortcutLabel></Shortcut>
                ))}
              </Shortcuts>
              <Personalize><PenGlyph />Personalizar</Personalize>
            </Ntp>
            <Scrollbar>
              <ScrollThumb />
              <ScrollArrow $mt={18}>
                <svg width="9" height="5" viewBox="0 0 9 5"><polygon points="0,0 9,0 4.5,5" fill="currentColor" /></svg>
              </ScrollArrow>
            </Scrollbar>
          </PageArea>
          <Popup>
            <PopTabs>
              {tabsData.map(([t, w, a, y]) => <PopTab key={t} $w={w} $active={a} $yellow={y}>{t}</PopTab>)}
            </PopTabs>
            <PopGrid>
              {tiles.map(t => (
                <Tile key={t.l} $span={t.s} $bg={t.bg} $hover={t.hover}>
                  <TileIcon>{t.i}</TileIcon>
                  <TileLabel $hover={t.hover}>{t.l}</TileLabel>
                  {t.hover && (
                    <>
                      <MiniTools><FaCog size={11} color="#e9dcea" /><HatMini /><InfoMini /></MiniTools>
                      <Cursor width="14" height="20" viewBox="0 0 14 20">
                        <path d="M1 1 V16 L5 12.5 L8 19 L11 18 L8 12 H13 Z" fill="#fff" stroke="#111" strokeWidth="1" />
                      </Cursor>
                    </>
                  )}
                </Tile>
              ))}
            </PopGrid>
          </Popup>
        </Win>
      </Body>
    </Desktop>
  );
}
